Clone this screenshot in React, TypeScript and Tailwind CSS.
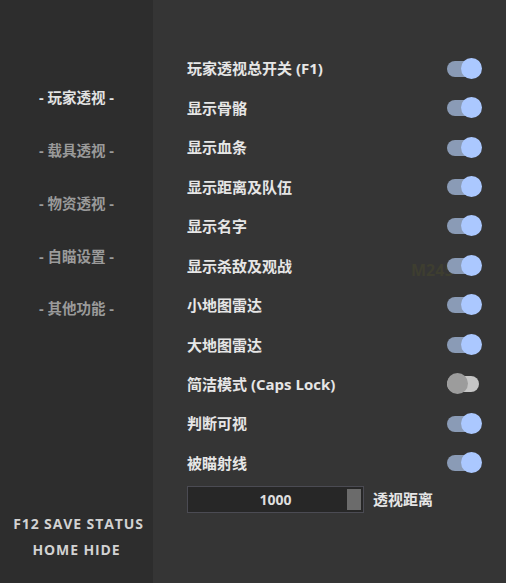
import { useState } from "react";

type Row = { label: string; on: boolean };

const navItems = ["玩家透视", "载具透视", "物资透视", "自瞄设置", "其他功能"];

const initialRows: Row[] = [
  { label: "玩家透视总开关 (F1)", on: true },
  { label: "显示骨骼", on: true },
  { label: "显示血条", on: true },
  { label: "显示距离及队伍", on: true },
  { label: "显示名字", on: true },
  { label: "显示杀敌及观战", on: true },
  { label: "小地图雷达", on: true },
  { label: "大地图雷达", on: true },
  { label: "简洁模式 (Caps Lock)", on: false },
  { label: "判断可视", on: true },
  { label: "被瞄射线", on: true },
];

function Toggle({ on, onClick }: { on: boolean; onClick: () => void }) {
  return (
    <button onClick={onClick} className="relative h-[22px] w-[35px] shrink-0">
      <span
        className={`absolute left-0 top-[3px] h-[16px] w-[32px] rounded-full ${
          on ? "bg-[#8a9bb6]" : "bg-[#c6c6c6]"
        }`}
      />
      <span
        className={`absolute top-0 h-[21px] w-[21px] rounded-full ${
          on ? "left-[14px] bg-[#abc8ff]" : "left-0 bg-[#9c9c9c]"
        }`}
      />
    </button>
  );
}

export default function App() {
  const [active, setActive] = useState(0);
  const [rows, setRows] = useState(initialRows);
  const [distance, setDistance] = useState("1000");

  const toggle = (i: number) =>
    setRows((prev) => prev.map((r, idx) => (idx === i ? { ...r, on: !r.on } : r)));

  return (
    <div
      className="flex h-[583px] w-[506px] overflow-hidden font-bold"
      style={{ fontFamily: '"Open Sans", "Noto Sans CJK SC", sans-serif' }}
    >
      <aside className="flex w-[153px] shrink-0 flex-col bg-[#2d2d2d] pt-[72px] pb-[20px]">
        {navItems.map((item, i) => (
          <button
            key={item}
            onClick={() => setActive(i)}
            className={`flex h-[52.7px] items-center justify-center text-[14.5px] ${
              active === i ? "text-[#e2e2e2]" : "text-[#9a9a9a]"
            }`}
          >
            - {item} -
          </button>
        ))}
        <div className="mt-auto flex flex-col items-center text-[14px] leading-[26px] tracking-[0.9px] text-[#d2d2d2]">
          <p className="pl-[4px]">F12 SAVE STATUS</p>
          <p>HOME HIDE</p>
        </div>
      </aside>

      <main className="relative flex flex-1 flex-col bg-[#353535] pl-[34px] pr-[24px] pt-[49px]">
        <span className="absolute left-[258px] top-[258px] text-[16px] text-[#3e3e30]">M245</span>
        {rows.map((row, i) => (
          <div key={row.label} className="relative flex h-[39.45px] items-center justify-between">
            <span className="text-[15px] text-[#e6e6e6]">{row.label}</span>
            <Toggle on={row.on} onClick={() => toggle(i)} />
          </div>
        ))}
        <div className="mt-[3px] flex items-center gap-[9px]">
          <div className="relative flex h-[27px] w-[177px] items-center border border-[#4b4b53] bg-[#272727]">
            <input
              value={distance}
              onChange={(e) => setDistance(e.target.value)}
              className="h-full w-full bg-transparent text-center text-[14px] text-[#dedede] outline-none"
            />
            <span className="absolute right-[2px] top-[2px] h-[21px] w-[14px] bg-[#6b6b6b]" />
          </div>
          <span className="text-[15px] text-[#e6e6e6]">透视距离</span>
        </div>
      </main>
    </div>
  );
}
